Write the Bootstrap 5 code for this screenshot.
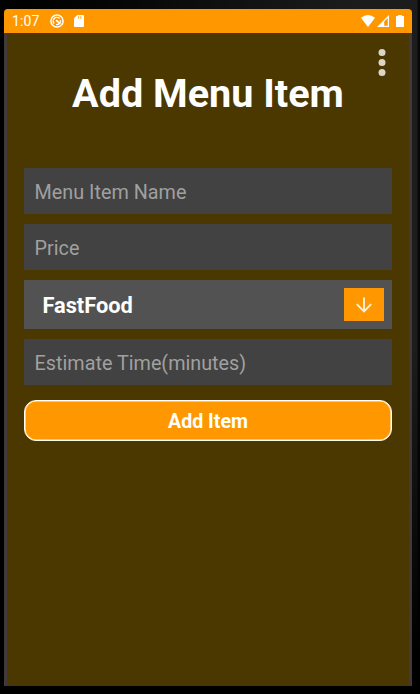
<!DOCTYPE html>
<html lang="en">
<head>
<meta charset="utf-8">
<meta name="viewport" content="width=device-width, initial-scale=1">
<title>Add Menu Item</title>
<link href="https://cdn.jsdelivr.net/npm/bootstrap@5.3.0/dist/css/bootstrap.min.css" rel="stylesheet">
<style>
body{background:linear-gradient(90deg,#000 0,#050505 25%,#1c1c1c 85%,#1c1c1c 417px,#080808 418px);font-family:Roboto,sans-serif;height:694px;overflow:hidden}
.device{padding:9px 8px 8px 4px;height:694px;background:linear-gradient(180deg,transparent 350px,#000 650px)}
.screen{height:677px;border-radius:4px 4px 0 0;overflow:hidden;background:#4b3700}
.status{height:24px;background:#ff9800;color:#fff;font-size:14px;line-height:24px;padding:0 7px 0 8px}
.clock{width:38px;letter-spacing:.1px}
.sd{margin-left:10px}
.page{height:653px;border:solid #423a3a;border-width:0 3px;padding:0 17px}
.menu-row{height:39px;padding:14px 4px 0}
.menu-btn{width:12px;height:30px}
h1{font-size:39.6px;line-height:48px;height:98px;margin:-2px 0 0}
.stack{gap:10px}
.entry{height:46px;background:#424242;border:0;border-radius:0;padding:2px 10px 0 10.6px;font-size:19.8px;color:#fff}
.entry:focus{background:#424242;color:#fff;box-shadow:none}
.entry::placeholder{color:#a0a0a0;opacity:1}
.picker{height:49px;background:#525252;color:#fff;font-size:21.8px;padding:0 8px 0 18.4px}
.picker span{padding-top:4px}
.picker-btn{width:40px;height:33px;background:#ff9800;border:0;border-radius:0}
.picker-btn:hover{background:#ff9800}
.submit{height:41px;margin-top:5px;background:#ff9800;color:#fff;border:1px solid #fffdf5;box-shadow:inset 0 0 0 .6px #fff3dc;border-radius:12px;font-size:19.6px;line-height:38px;padding:2px 0 0}
.submit:hover{background:#ff9800;color:#fff;border-color:#fffdf5}
</style>
</head>
<body>
<div class="device">
<main class="screen">
  <header class="status d-flex align-items-center">
    <span class="clock">1:07</span>
    <svg width="14" height="14" viewBox="0 0 14 14" fill="none" stroke="#fff"><circle cx="7" cy="7" r="6.1" stroke-width="1.5"/><path d="M4.2 9.6A3.7 3.7 0 0 1 9.6 4.5M10.5 6.2A3.7 3.7 0 0 1 6 10.5" stroke-width="1.4"/><path d="M6.2 6.2l4 3.6" stroke-width="1.8"/></svg>
    <svg class="sd" width="10" height="12" viewBox="0 0 10 12"><path d="M3.3 0H9a1 1 0 0 1 1 1v10a1 1 0 0 1-1 1H1a1 1 0 0 1-1-1V3.3z" fill="#fff"/><path d="M4.6 1.3v2.4M6.8 1.3v2.4" stroke="#ff9800" stroke-width=".9"/></svg>
    <svg class="ms-auto" width="44" height="14" viewBox="0 0 44 14"><path d="M0 3.7Q7 -1.5 14 3.7L7 13z" fill="#fff"/><path d="M16 13L28 1v12z" fill="#fff"/><path d="M23.2 7.6L26.8 4v7.8h-3.6z" fill="#ff9800"/><path d="M35 2h2V1h4v1h2v11h-8z" fill="#fff"/></svg>
  </header>
  <div class="page">
    <div class="menu-row d-flex justify-content-end">
      <svg class="menu-btn" viewBox="0 0 12 30" fill="#dbd5ca"><circle cx="6" cy="5.5" r="3.5"/><circle cx="6" cy="15.5" r="3.5"/><circle cx="6" cy="25.5" r="3.5"/></svg>
    </div>
    <h1 class="fw-bold text-white text-center">Add Menu Item</h1>
    <form class="stack d-flex flex-column">
      <input class="entry form-control" placeholder="Menu Item Name">
      <input class="entry form-control" placeholder="Price">
      <div class="picker d-flex align-items-center justify-content-between fw-bold">
        <span>FastFood</span>
        <button type="button" class="picker-btn btn p-0 d-flex align-items-center justify-content-center" aria-label="Choose category">
          <svg width="16" height="16" viewBox="0 0 16 16" fill="none" stroke="#fff0d8" stroke-width="1.9"><path d="M8 .5v14M.8 7.1L8 14.3l7.2-7.2"/></svg>
        </button>
      </div>
      <input class="entry form-control" placeholder="Estimate Time(minutes)">
      <button type="button" class="submit btn w-100 fw-bold">Add Item</button>
    </form>
  </div>
</main>
</div>
<script src="https://cdn.jsdelivr.net/npm/bootstrap@5.3.0/dist/js/bootstrap.bundle.min.js"></script>
</body>
</html>
